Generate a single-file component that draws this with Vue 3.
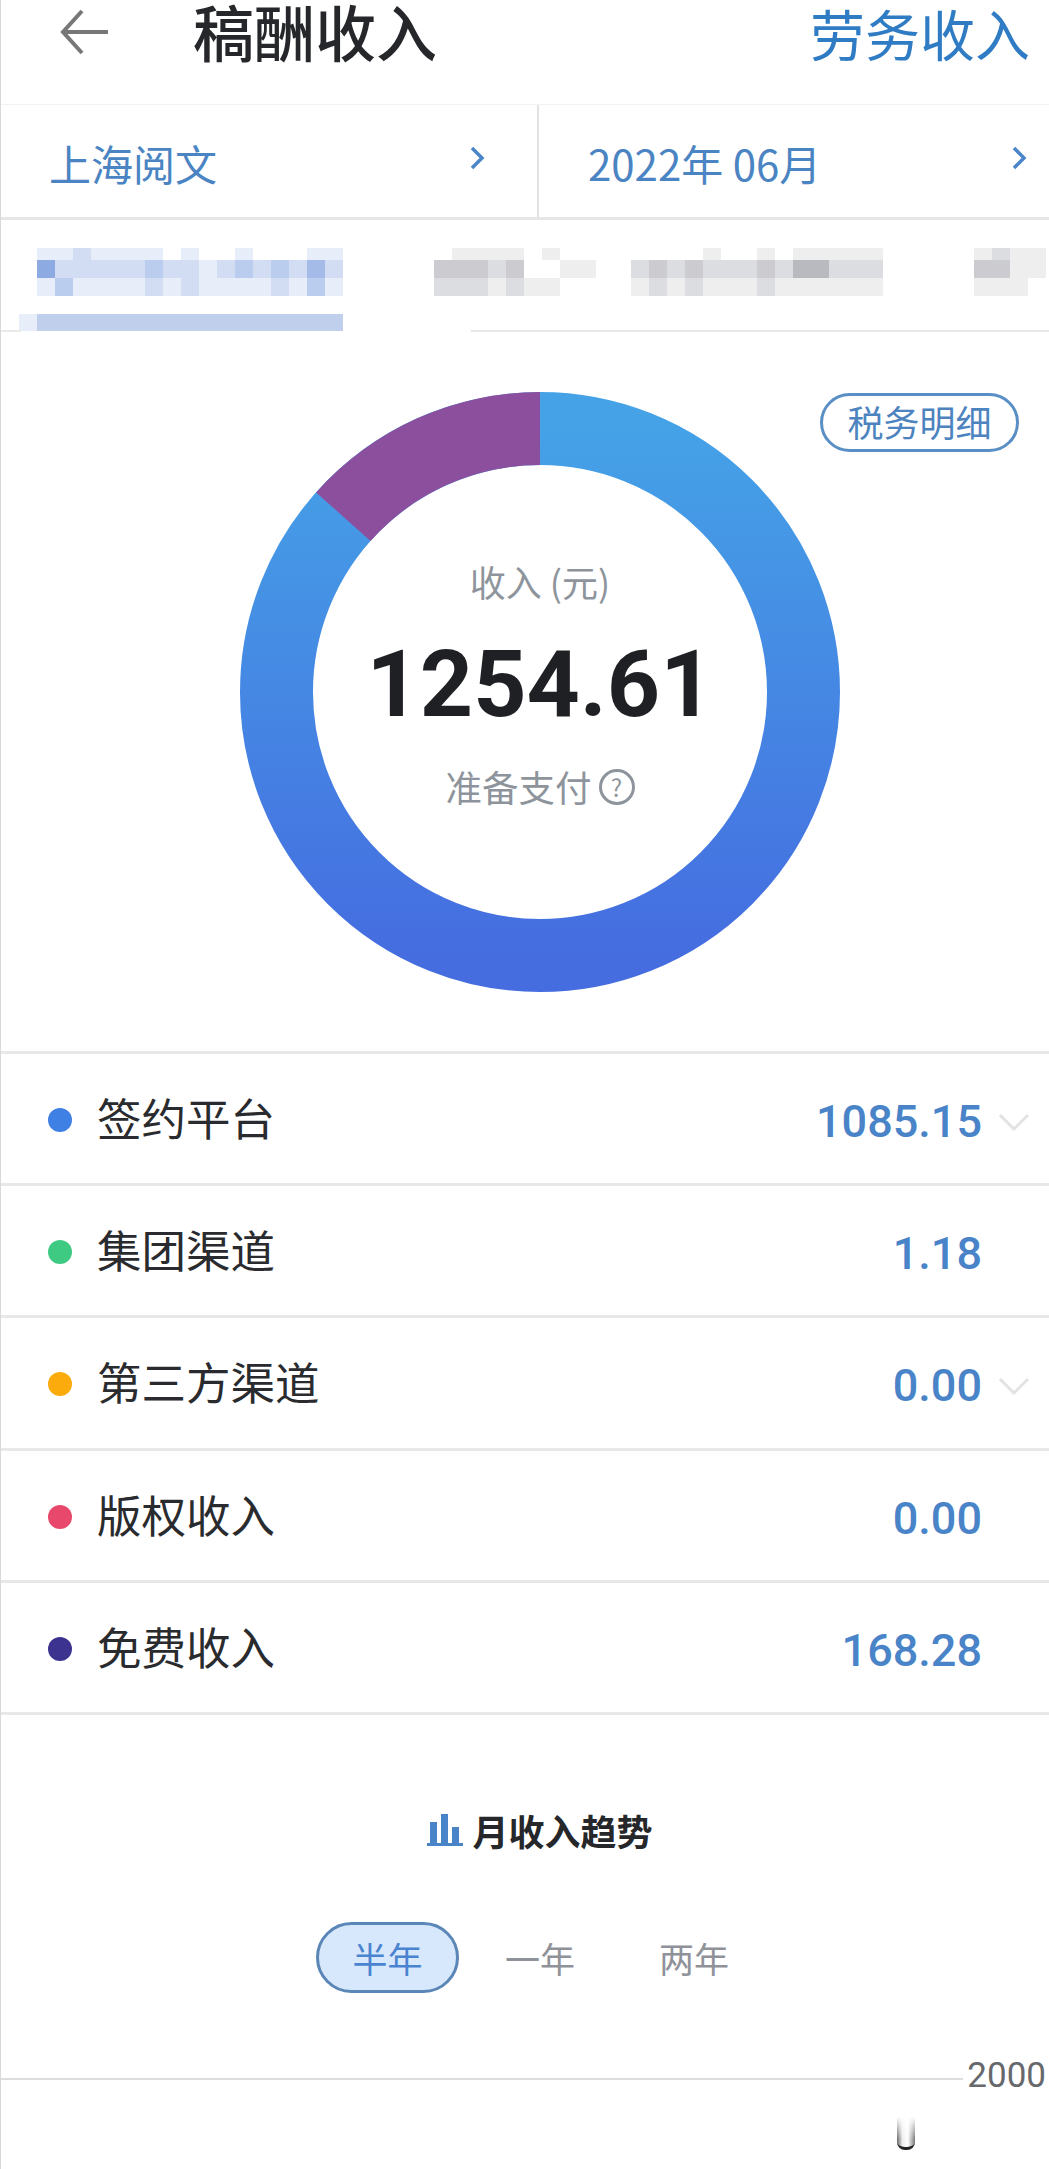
<template>
  <div class="page">
    <div class="header">
      <svg class="backIcon" viewBox="0 0 48 46" width="48" height="46">
        <path d="M22 2 L3 23 L22 44 M3 23 H48" fill="none" stroke="#777" stroke-width="4" />
      </svg>
      <div class="title">稿酬收入</div>
      <div class="headerLink">劳务收入</div>
    </div>

    <div class="filters">
      <div class="filter filterLeft">
        <span>上海阅文</span>
        <svg class="chevron" viewBox="0 0 16 24" width="16" height="24"><path d="M3 2 L13 12 L3 22" fill="none" stroke="#4a86c8" stroke-width="3.5" /></svg>
      </div>
      <div class="filter filterRight">
        <span>2022年 06月</span>
        <svg class="chevron" viewBox="0 0 16 24" width="16" height="24"><path d="M3 2 L13 12 L3 22" fill="none" stroke="#4a86c8" stroke-width="3.5" /></svg>
      </div>
    </div>

    <div class="strip">
      <div class="mosaicRow">
        <div v-for="block in mosaic" :key="block.left" class="mosaicBlock" :style="{ marginLeft: block.left + 'px' }">
          <div v-for="(row, r) in block.rows" :key="r" class="mosaicLine" :class="'line' + r">
            <i v-for="(level, c) in row" :key="c" :style="{ background: cellColor(block.color, level) }"></i>
          </div>
        </div>
      </div>
      <div class="blurLine"></div>
      <div class="stripBorder"><span></span><b></b></div>
    </div>

    <div class="chartArea">
      <button class="taxBtn">税务明细</button>
      <div class="donutWrap">
        <svg viewBox="0 0 600 600" width="600" height="600">
          <defs>
            <linearGradient id="ringBlue" x1="0" y1="0" x2="0" y2="1">
              <stop offset="0" stop-color="#45a2e7" />
              <stop offset="1" stop-color="#456de0" />
            </linearGradient>
          </defs>
          <circle cx="300" cy="300" r="263.5" fill="none" stroke="url(#ringBlue)" stroke-width="73" />
          <path :d="purplePath" fill="#8c4f9e" />
        </svg>
        <div class="donutText">
          <div class="incomeLabel">收入 (元)</div>
          <div class="incomeValue">1254.61</div>
          <div class="incomeStatus">
            准备支付
            <span class="help">?</span>
          </div>
        </div>
      </div>
    </div>

    <div class="list">
      <div v-for="item in rows" :key="item.label" class="row">
        <span class="dot" :style="{ background: item.color }"></span>
        <span class="rowLabel">{{ item.label }}</span>
        <span class="rowValue">{{ item.value }}</span>
        <svg v-if="item.more" class="rowArrow" viewBox="0 0 32 18" width="32" height="18">
          <path d="M2 2 L16 16 L30 2" fill="none" stroke="#e3e3e3" stroke-width="3" />
        </svg>
      </div>
    </div>

    <div class="trend">
      <div class="trendTitle">
        <svg viewBox="0 0 36 32" width="36" height="32">
          <path d="M0 29 H36 V32 H0 Z M3 8 H10 V29 H3 Z M14 0 H21 V29 H14 Z M25 13 H32 V29 H25 Z" fill="#4a84c8" />
        </svg>
        <span>月收入趋势</span>
      </div>
      <div class="ranges">
        <span class="range active">半年</span>
        <span class="range">一年</span>
        <span class="range last">两年</span>
      </div>
    </div>

    <div class="axis">
      <div class="axisLine"></div>
      <span class="axisLabel">2000</span>
    </div>
    <div class="watermark"></div>
  </div>
</template>

<script setup>
const rows = [
  { label: '签约平台', value: '1085.15', color: '#3f80e4', more: true },
  { label: '集团渠道', value: '1.18', color: '#3fca84', more: false },
  { label: '第三方渠道', value: '0.00', color: '#fbab0c', more: true },
  { label: '版权收入', value: '0.00', color: '#e8486c', more: false },
  { label: '免费收入', value: '168.28', color: '#3c3390', more: false },
]

// pixelated (blurred out) text, one digit per mosaic cell
const mosaic = [
  {
    left: 36,
    color: '80,125,210',
    rows: ['11211110100100011', '52222232212323242', '13111121211112131'],
  },
  {
    left: 73,
    color: '120,122,135',
    rows: ['00111101000', '03332300110', '02221211000'],
  },
  {
    left: 17,
    color: '120,122,135',
    rows: ['00001001011111', '23232223244222', '12121112111111'],
  },
  {
    left: 91,
    color: '120,122,135',
    rows: ['1211', '3311', '1110'],
  },
]

function cellColor(color, level) {
  return `rgba(${color},${Number(level) * 0.13})`
}

// purple slice of the ring: 168.28 out of 1254.61, going back from 12 o'clock
const angle = (168.28 / 1254.61) * Math.PI * 2
const point = (r) => `${(300 - r * Math.sin(angle)).toFixed(1)} ${(300 - r * Math.cos(angle)).toFixed(1)}`
const purplePath = `M300 0 A300 300 0 0 0 ${point(300)} L${point(227)} A227 227 0 0 1 300 73 Z`
</script>

<style>
html, body {
  margin: 0;
  background: #fff;
}
</style>

<style scoped>
.page {
  position: relative;
  width: 1049px;
  height: 2169px;
  overflow: hidden;
  background: #fff;
  border-left: 1px solid #d9d9d9;
  box-sizing: border-box;
  font-family: "Noto Sans CJK SC", "Noto Sans", sans-serif;
}

.header {
  height: 104px;
  display: flex;
  align-items: flex-start;
  padding: 0 19px 0 59px;
  box-sizing: border-box;
}

.backIcon {
  margin-top: 9px;
}

.title {
  margin-left: 85px;
  font-size: 61px;
  line-height: 62px;
  font-weight: 500;
  color: #26272a;
}

.headerLink {
  margin-left: auto;
  font-size: 55px;
  line-height: 64px;
  color: #2f7cc4;
}

.filters {
  display: flex;
  height: 116px;
  border-top: 1px solid #f2f2f2;
  border-bottom: 3px solid #e6e6e6;
  box-sizing: border-box;
  color: #4b84c2;
  font-size: 42px;
}

.filter {
  display: flex;
  align-items: center;
  justify-content: space-between;
  box-sizing: border-box;
  padding-top: 2px;
}

.filterLeft {
  width: 538px;
  padding-left: 48px;
  padding-right: 52px;
  border-right: 2px solid #e3e3e3;
}

.filterRight {
  flex: 1;
  padding-left: 49px;
  padding-right: 22px;
}

.chevron {
  margin-bottom: 8px;
}

.strip {
  height: 112px;
  padding-top: 28px;
  box-sizing: border-box;
  position: relative;
}

.mosaicRow {
  display: flex;
}

.mosaicLine {
  display: flex;
}

.mosaicLine i {
  display: block;
  width: 18px;
}

.line0 { height: 12px; }
.line1 { height: 18px; }
.line2 { height: 18px; }

.blurLine {
  width: 306px;
  height: 17px;
  margin: 18px 0 0 36px;
  background: #c0d0ec;
  box-shadow: -18px 0 0 #e8eef9;
}

.stripBorder {
  display: flex;
  position: absolute;
  left: 0;
  right: 0;
  bottom: 0;
  height: 2px;
}

.stripBorder span {
  width: 20px;
  background: #eaeaea;
}

.stripBorder b {
  margin-left: 450px;
  flex: 1;
  background: #e8e8e8;
}

.chartArea {
  height: 719px;
  padding-top: 60px;
  box-sizing: border-box;
  position: relative;
}

.taxBtn {
  position: absolute;
  top: 61px;
  left: 819px;
  width: 199px;
  height: 59px;
  padding: 0 0 3px;
  border: 3px solid #5a8fc6;
  border-radius: 30px;
  background: #fff;
  color: #4d84bf;
  font-family: inherit;
  font-size: 36px;
  line-height: 50px;
}

.donutWrap {
  position: relative;
  width: 600px;
  height: 600px;
  margin-left: 239px;
}

.donutWrap svg {
  display: block;
}

.donutText {
  position: absolute;
  inset: 0;
  display: flex;
  flex-direction: column;
  align-items: center;
  padding-top: 165px;
  box-sizing: border-box;
}

.incomeLabel {
  font-size: 36px;
  line-height: 48px;
  color: #8e949c;
}

.incomeValue {
  margin-top: 25px;
  font-family: Roboto, sans-serif;
  font-size: 93px;
  line-height: 110px;
  font-weight: 700;
  color: #1f2024;
}

.incomeStatus {
  margin-top: 22px;
  display: flex;
  align-items: center;
  gap: 7px;
  font-size: 36.5px;
  line-height: 50px;
  color: #8e949c;
}

.help {
  width: 30px;
  height: 30px;
  border: 3px solid #8e949c;
  border-radius: 50%;
  font-size: 24px;
  line-height: 30px;
  text-align: center;
}

.row {
  height: 132.2px;
  display: flex;
  align-items: center;
  border-top: 3px solid #e8e8e8;
  padding-top: 3px;
  box-sizing: border-box;
  position: relative;
}

.row:last-child {
  height: 135px;
  border-bottom: 3px solid #e8e8e8;
}

.dot {
  width: 24px;
  height: 24px;
  margin-left: 47px;
  border-radius: 50%;
}

.rowLabel {
  margin-left: 25px;
  margin-top: -6px;
  font-size: 44.5px;
  line-height: 60px;
  color: #2a2b2e;
}

.rowValue {
  position: absolute;
  right: 67px;
  margin-top: 3px;
  font-family: Roboto, sans-serif;
  font-size: 45px;
  font-weight: 500;
  color: #4a84c8;
}

.rowArrow {
  position: absolute;
  right: 19px;
  margin-top: 3px;
}

.trend {
  height: 352px;
  position: relative;
}

.trendTitle {
  display: flex;
  align-items: center;
  justify-content: center;
  gap: 9px;
  padding-top: 90px;
  padding-left: 30px;
  height: 50px;
  font-size: 36px;
  font-weight: 700;
  color: #26272a;
  box-sizing: content-box;
}

.ranges {
  display: flex;
  margin-top: 67px;
  margin-left: 315px;
}

.range {
  width: 143px;
  height: 71px;
  box-sizing: border-box;
  font-size: 35px;
  line-height: 65px;
  text-align: center;
  color: #8f9299;
  border: 3px solid transparent;
}

.range + .range {
  width: 154px;
  margin-left: 4px;
}

.range.last {
  width: 146px;
}

.range.active {
  border-color: #5a86b8;
  border-radius: 36px;
  background: #d8e8fc;
  color: #4a84d0;
}

.axis {
  display: flex;
  align-items: center;
  height: 50px;
  margin-top: -16px;
}

.axisLine {
  flex: 1;
  height: 2px;
  margin-top: 6px;
  background: #dddddd;
}

.axisLabel {
  margin-left: 4px;
  margin-right: 3px;
  font-family: Roboto, sans-serif;
  font-size: 35px;
  color: #66686c;
}

.watermark {
  position: absolute;
  left: 896px;
  top: 2117px;
  width: 18px;
  height: 30px;
  border-radius: 0 0 8px 8px;
  border-bottom: 3px solid #222;
  background: linear-gradient(#fff, transparent 75%), linear-gradient(90deg, #666 0, #eee 30%, #fff 60%, #777 100%);
}
</style>
